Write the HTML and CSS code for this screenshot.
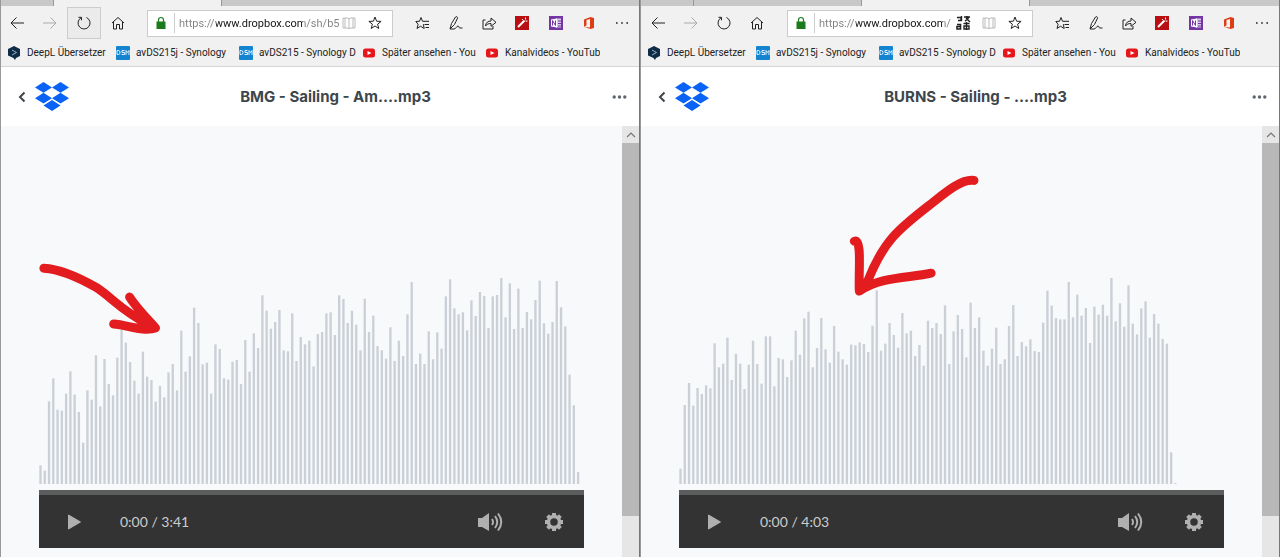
FILE: index.html
```html
<!DOCTYPE html>
<html lang="de">
<head>
    <meta charset="UTF-8">
    <meta name="viewport" content="width=device-width, initial-scale=1.0">
    <title>Dropbox - Sailing</title>
    <link rel="stylesheet" href="styles.css">
</head>
<body>
    <!-- Shared icons -->
    <svg class="sprite" aria-hidden="true">
        <symbol id="i-back" viewBox="0 0 16 16"><path d="M15 8H2M7.500 2.500L2 8l5.500 5.500"/></symbol>
        <symbol id="i-forward" viewBox="0 0 16 16"><path d="M1 8h13M8.500 2.500L14 8l-5.500 5.500"/></symbol>
        <symbol id="i-reload" viewBox="0 0 16 16"><path d="M10.500 2.500A6 6 0 1 1 5 2.800M2.500 2.300H5.500v3"/></symbol>
        <symbol id="i-home" viewBox="0 0 16 16"><path d="M2 8l6-5.500L14 8M3.500 7v7h3V9.500h3V14h3V7"/></symbol>
        <symbol id="i-lock" viewBox="0 0 12 14"><path d="M1.500 5.500h9v7.500h-9z" fill="#1b7a1b" stroke="none"/><path d="M3.500 6V4a2.500 2.500 0 0 1 5 0v2" stroke="#1b7a1b" stroke-width="1.200"/></symbol>
        <symbol id="i-book" viewBox="0 0 16 16"><path d="M2 3h5l1 1 1-1h5v10H9l-1 1-1-1H2zM8 4v10M4 3v10M12 3v10"/></symbol>
        <symbol id="i-star" viewBox="0 0 16 16"><path d="M8 2l1.600 4.200 4.500.2-3.500 2.800 1.200 4.300L8 11l-3.800 2.500 1.200-4.300-3.500-2.800 4.500-.2z"/></symbol>
        <symbol id="i-favs" viewBox="0 0 16 16"><path d="M9 9.500l-.600 0 .8 4-3.700-2.300L2 13.500l1.100-4.200L.8 6.500l3.700-.2L6 2.500l1.500 3.800H14M9.500 9.500H14M10.500 12.500H14"/></symbol>
        <symbol id="i-pen" viewBox="0 0 16 16"><path d="M2 14l1.500-5.500L7.500 2c.8-1 2.500 0 2 1.200L6.500 9.500 2 14h4c2 0 2.500-3 4-3 1.200 0 .5 2 2 2h2.500"/></symbol>
        <symbol id="i-share" viewBox="0 0 16 16"><path d="M4.500 5H2v9h10v-3M4.500 11c.3-3.500 2.500-5 5.500-5V3l5 4.300-5 4V8.500c-2.500 0-4.200.6-5.500 2.500z"/></symbol>
        <symbol id="i-wand" viewBox="0 0 14 14"><path d="M0 0h14v14H0z" fill="#b90f12" stroke="none"/><path d="M3 11l6.500-6.500" stroke="#fff" stroke-width="2"/><path d="M10.500 1.500v2M12.500 5h-2M7 3l.8.800" stroke="#fff"/></symbol>
        <symbol id="i-onenote" viewBox="0 0 14 14"><path d="M0 0h14v14H0z" fill="#7436a4" stroke="none"/><path d="M7 2.500h5v9H7z" fill="#d8c7e6" stroke="none"/><path d="M2 3.500l6-1v9l-6-1z" fill="#fff" stroke="none"/><path d="M3.500 9.500v-5l3 5v-5" stroke="#7436a4"/><path d="M9 5h3M9 7.500h3M9 10h3" stroke="#7436a4"/></symbol>
        <symbol id="i-office" viewBox="0 0 14 14"><path d="M2 3.500L8.500 1 12 2v10l-3.500 1L2 10.800l6 .600V3L4.500 4v5.500L2 10.800z" fill="#dc3e15" stroke="none"/></symbol>
        <symbol id="i-more" viewBox="0 0 16 16"><path d="M2 7.200h1.600v1.600H2zM7.200 7.200h1.600v1.600H7.200zM12.400 7.200H14v1.600h-1.600z" fill="currentColor" stroke="none"/></symbol>
        <symbol id="i-translate" viewBox="0 0 16 16"><path d="M9 2h6M12 1v2M10 6c2-1 3-2 4-4M11 3l4 4M2 2.500h4v3H3M6.500 1v5" stroke-width="1.400"/><path d="M2 9.500h3.500V14H2v-2.500h3.500" stroke-width="1.600"/><path d="M8.500 8.500h6M11.500 7v8M9 11h5v3H9z" stroke-width="1.400"/></symbol>
        <symbol id="i-deepl" viewBox="0 0 12 14"><path d="M6 0l6 3v7l-4 2-1 2-1.500-2L0 9.500V3z" fill="#0f2b46" stroke="none"/><path d="M4 4l4.500 2.500L4 9" stroke="#8fb4c9"/></symbol>
        <symbol id="i-dsm" viewBox="0 0 14 14"><rect width="14" height="14" rx="1" fill="#1584d0" stroke="none"/><path d="M1 4.500h1.500q1.500 0 1.500 2t-1.500 2H1zM8.500 4.500H6v2h2.500v2H5.500M10 9V4.500l1.500 2 1.500-2V9" stroke="#e3f2ff"/></symbol>
        <symbol id="i-youtube" viewBox="0 0 14 14"><rect x="1" y="2.500" width="12" height="9" rx="2.500" fill="#e6161b" stroke="none"/><path d="M5.500 5l4 2-4 2z" fill="#fff" stroke="none"/></symbol>
        <symbol id="i-dropbox" viewBox="0 0 34 30"><path d="M8.500 0L17 5.400 8.500 10.800 0 5.400zM25.500 0L34 5.400l-8.500 5.400L17 5.400zM8.500 10.800L17 16.200l-8.500 5.400L0 16.200zM25.500 10.800l8.500 5.400-8.500 5.400-8.500-5.400zM17 18l8.500 5.400L17 29l-8.500-5.600z" fill="#0a63f5" stroke="none"/></symbol>
        <symbol id="i-chevron" viewBox="0 0 8 12"><path d="M6.500 1.500L2 6l4.500 4.500" stroke-width="2"/></symbol>
        <symbol id="i-dots" viewBox="0 0 16 16"><path d="M.5 8a1.700 1.700 0 1 0 3.400 0 1.700 1.700 0 1 0-3.400 0M5.800 8a1.700 1.700 0 1 0 3.400 0 1.700 1.700 0 1 0-3.400 0M11.100 8a1.700 1.700 0 1 0 3.400 0 1.700 1.700 0 1 0-3.400 0" fill="#5c666e" stroke="none"/></symbol>
        <symbol id="i-up" viewBox="0 0 10 8"><path d="M1 6l4-4 4 4" stroke-width="1.200"/></symbol>
        <symbol id="i-play" viewBox="0 0 14 16"><path d="M1 1v14l12-7z" fill="currentColor" stroke="currentColor" stroke-linejoin="round"/></symbol>
        <symbol id="i-volume" viewBox="0 0 26 20"><path d="M1 6h4l7-5v18l-7-4H1z" fill="currentColor" stroke="none"/><path d="M15 7q2 3 0 6M18 4q4.500 6 0 12M21 1.500q6.500 8.500 0 17" stroke-width="2"/></symbol>
        <symbol id="i-gear" viewBox="0 0 20 20"><circle cx="10" cy="10" r="5.500" stroke-width="3.500"/><path d="M10 1v3M10 16v3M1 10h3M16 10h3M3.600 3.600l2.200 2.200M14.200 14.200l2.200 2.200M3.600 16.400l2.200-2.200M14.200 5.800l2.200-2.200" stroke-width="4"/></symbol>
    </svg>

    <main class="desktop">
        <section class="window">
            <div class="tabs">
                <div class="tab tab-first"></div>
                <div class="tab active"></div>
            </div>
            <nav class="toolbar">
                <div class="nav-buttons">
                    <button aria-label="Zurück"><svg class="icon"><use href="#i-back"/></svg></button>
                    <button aria-label="Vorwärts" disabled><svg class="icon"><use href="#i-forward"/></svg></button>
                    <button class="pressed" aria-label="Aktualisieren"><svg class="icon"><use href="#i-reload"/></svg></button>
                    <button aria-label="Startseite"><svg class="icon"><use href="#i-home"/></svg></button>
                </div>
                <div class="address">
                    <svg class="icon lock"><use href="#i-lock"/></svg>
                    <input type="text" class="url" aria-label="Adresse" value="https://www.dropbox.com/sh/b5">
                    <button aria-label="Leseansicht" disabled><svg class="icon"><use href="#i-book"/></svg></button>
                    <button class="star" aria-label="Favorit"><svg class="icon"><use href="#i-star"/></svg></button>
                </div>
                <div class="tools">
                    <button aria-label="Favoriten"><svg class="icon"><use href="#i-favs"/></svg></button>
                    <button aria-label="Notizen"><svg class="icon"><use href="#i-pen"/></svg></button>
                    <button aria-label="Teilen"><svg class="icon"><use href="#i-share"/></svg></button>
                    <button aria-label="Bearbeiten"><svg class="icon small"><use href="#i-wand"/></svg></button>
                    <button aria-label="OneNote"><svg class="icon small"><use href="#i-onenote"/></svg></button>
                    <button aria-label="Office"><svg class="icon small"><use href="#i-office"/></svg></button>
                    <button aria-label="Mehr"><svg class="icon"><use href="#i-more"/></svg></button>
                </div>
            </nav>
            <div class="bookmarks">
                <a href="#" class="deepl"><svg class="icon small"><use href="#i-deepl"/></svg><span>DeepL Übersetzer</span></a>
                <a href="#"><svg class="icon small"><use href="#i-dsm"/></svg><span>avDS215j - Synology</span></a>
                <a href="#"><svg class="icon small"><use href="#i-dsm"/></svg><span>avDS215 - Synology D</span></a>
                <a href="#"><svg class="icon small"><use href="#i-youtube"/></svg><span>Später ansehen - You</span></a>
                <a href="#"><svg class="icon small"><use href="#i-youtube"/></svg><span>Kanalvideos - YouTub</span></a>
            </div>
            <header class="file-header">
                <a href="#" class="back" aria-label="Zurück"><svg><use href="#i-chevron"/></svg></a>
                <a href="#" class="logo" aria-label="Dropbox"><svg><use href="#i-dropbox"/></svg></a>
                <h1>BMG - Sailing - Am....mp3</h1>
                <button class="more" aria-label="Mehr"><svg class="icon"><use href="#i-dots"/></svg></button>
            </header>
            <div class="page">
                <div class="preview">
                    <svg class="wave" id="wave-bmg" viewBox="0 0 1635 687" preserveAspectRatio="none"></svg>
                    <div class="player">
                        <input type="range" class="seek" aria-label="Position" min="0" max="221" value="0">
                        <div class="controls">
                            <button class="play" aria-label="Abspielen"><svg><use href="#i-play"/></svg></button>
                            <span class="time">0:00 / 3:41</span>
                            <button class="volume" aria-label="Lautstärke"><svg><use href="#i-volume"/></svg></button>
                            <button class="settings" aria-label="Einstellungen"><svg><use href="#i-gear"/></svg></button>
                        </div>
                    </div>
                </div>
                <div class="scrollbar">
                    <button aria-label="Nach oben"><svg><use href="#i-up"/></svg></button>
                    <div class="thumb"></div>
                    <div class="track"></div>
                </div>
            </div>
            <svg class="marker" viewBox="0 0 640 557">
                <path d="M43 269C60 270 81 280 95 288C112 299 120 311 147 325M129 298C136 309 147 320 155 329C143 333 127 326 113 325"/>
            </svg>
        </section>

        <section class="window">
            <div class="tabs">
                <div class="tab tab-first"></div>
                <div class="tab"></div>
                <div class="tab active"></div>
            </div>
            <nav class="toolbar">
                <div class="nav-buttons">
                    <button aria-label="Zurück"><svg class="icon"><use href="#i-back"/></svg></button>
                    <button aria-label="Vorwärts" disabled><svg class="icon"><use href="#i-forward"/></svg></button>
                    <button aria-label="Aktualisieren"><svg class="icon"><use href="#i-reload"/></svg></button>
                    <button aria-label="Startseite"><svg class="icon"><use href="#i-home"/></svg></button>
                </div>
                <div class="address">
                    <svg class="icon lock"><use href="#i-lock"/></svg>
                    <input type="text" class="url" aria-label="Adresse" value="https://www.dropbox.com/">
                    <button class="translate" aria-label="Übersetzen"><svg class="icon"><use href="#i-translate"/></svg></button>
                    <button aria-label="Leseansicht" disabled><svg class="icon"><use href="#i-book"/></svg></button>
                    <button class="star" aria-label="Favorit"><svg class="icon"><use href="#i-star"/></svg></button>
                </div>
                <div class="tools">
                    <button aria-label="Favoriten"><svg class="icon"><use href="#i-favs"/></svg></button>
                    <button aria-label="Notizen"><svg class="icon"><use href="#i-pen"/></svg></button>
                    <button aria-label="Teilen"><svg class="icon"><use href="#i-share"/></svg></button>
                    <button aria-label="Bearbeiten"><svg class="icon small"><use href="#i-wand"/></svg></button>
                    <button aria-label="OneNote"><svg class="icon small"><use href="#i-onenote"/></svg></button>
                    <button aria-label="Office"><svg class="icon small"><use href="#i-office"/></svg></button>
                    <button aria-label="Mehr"><svg class="icon"><use href="#i-more"/></svg></button>
                </div>
            </nav>
            <div class="bookmarks">
                <a href="#" class="deepl"><svg class="icon small"><use href="#i-deepl"/></svg><span>DeepL Übersetzer</span></a>
                <a href="#"><svg class="icon small"><use href="#i-dsm"/></svg><span>avDS215j - Synology</span></a>
                <a href="#"><svg class="icon small"><use href="#i-dsm"/></svg><span>avDS215 - Synology D</span></a>
                <a href="#"><svg class="icon small"><use href="#i-youtube"/></svg><span>Später ansehen - You</span></a>
                <a href="#"><svg class="icon small"><use href="#i-youtube"/></svg><span>Kanalvideos - YouTub</span></a>
            </div>
            <header class="file-header">
                <a href="#" class="back" aria-label="Zurück"><svg><use href="#i-chevron"/></svg></a>
                <a href="#" class="logo" aria-label="Dropbox"><svg><use href="#i-dropbox"/></svg></a>
                <h1>BURNS - Sailing - ....mp3</h1>
                <button class="more" aria-label="Mehr"><svg class="icon"><use href="#i-dots"/></svg></button>
            </header>
            <div class="page">
                <div class="preview">
                    <svg class="wave" id="wave-burns" viewBox="0 0 1635 687" preserveAspectRatio="none"></svg>
                    <div class="player">
                        <input type="range" class="seek" aria-label="Position" min="0" max="243" value="0">
                        <div class="controls">
                            <button class="play" aria-label="Abspielen"><svg><use href="#i-play"/></svg></button>
                            <span class="time">0:00 / 4:03</span>
                            <button class="volume" aria-label="Lautstärke"><svg><use href="#i-volume"/></svg></button>
                            <button class="settings" aria-label="Einstellungen"><svg><use href="#i-gear"/></svg></button>
                        </div>
                    </div>
                </div>
                <div class="scrollbar">
                    <button aria-label="Nach oben"><svg><use href="#i-up"/></svg></button>
                    <div class="thumb"></div>
                    <div class="track"></div>
                </div>
            </div>
            <svg class="marker" viewBox="0 0 640 557">
                <path d="M334 181C320 179 301 197 289 206C258 230 243 242 227 283M214 242C222 240 218 271 219 292C241 277 270 279 291 274"/>
            </svg>
        </section>
    </main>

    <script src="wave.js"></script>
</body>
</html>
```
FILE: styles.css
```css
* {
    box-sizing: border-box;
}
body {
    margin: 0;
    font-family: Roboto, "Open Sans", sans-serif;
    font-size: 10px;
    color: #222;
    background-color: #f7f9fb;
}
button {
    display: flex;
    align-items: center;
    justify-content: center;
    padding: 0;
    border: none;
    background: none;
    color: inherit;
}
a {
    color: inherit;
    text-decoration: none;
}
svg {
    display: block;
    fill: none;
    stroke: currentColor;
}
.sprite {
    display: none;
}
.icon {
    width: 16px;
    height: 16px;
    flex: none;
}
.icon.small {
    width: 14px;
    height: 14px;
}
.desktop {
    display: grid;
    grid-template-columns: 1fr 1fr;
    min-height: 100vh;
}
.window {
    position: relative;
    display: flex;
    flex-direction: column;
    min-width: 0;
    border-left: 1px solid #999;
    border-right: 1px solid #777;
}

/* Browser chrome */
.tabs {
    display: flex;
    height: 6px;
    background-color: #c8c8c8;
}
.tab {
    width: 168px;
    border-right: 1px solid #999;
}
.tab-first {
    width: 53px;
}
.tab.active {
    background-color: #f1f1f1;
}
.toolbar {
    display: flex;
    align-items: center;
    height: 34px;
    background-color: #f1f1f1;
}
.nav-buttons {
    display: flex;
    width: 133px;
    margin-right: 13px;
}
.nav-buttons button {
    flex: 1;
    height: 32px;
}
.nav-buttons button:disabled {
    color: #aaa;
}
.nav-buttons .pressed {
    background-color: #ebebeb;
    border: 1px solid #ccc;
}
.address {
    display: flex;
    align-items: center;
    flex: 1;
    min-width: 0;
    height: 27px;
    background-color: #fff;
    border: 1px solid #ccc;
}
.address .lock {
    width: 26px;
    height: 14px;
}
.address button {
    width: 18px;
    height: 25px;
}
.address .star {
    width: 34px;
}
.address .translate {
    margin-right: 8px;
}
.address button:disabled {
    color: #bbb;
}
.url {
    flex: 1;
    min-width: 0;
    height: 20px;
    padding: 0 0 0 4px;
    border: none;
    border-left: 1px solid #ccc;
    font: 11px Roboto, "Open Sans", sans-serif;
    color: transparent;
    background: linear-gradient(90deg, #808080 41px, #111 41px, #111 128px, #808080 128px) text;
}
.tools {
    display: flex;
    width: 233px;
    margin-left: 13px;
}
.tools button {
    flex: 1;
    height: 32px;
}
.bookmarks {
    display: flex;
    height: 27px;
    padding-left: 6px;
    background-color: #f1f1f1;
    border-bottom: 1px solid #d5d5d5;
}
.bookmarks a {
    display: flex;
    align-items: center;
    gap: 6px;
    width: 123px;
}
.bookmarks .deepl {
    width: 109px;
}
.bookmarks span {
    overflow: hidden;
    white-space: nowrap;
    line-height: 18px;
}

/* Dropbox header */
.file-header {
    display: flex;
    align-items: center;
    height: 59px;
    padding: 0 11px 0 17px;
    background-color: #fff;
    color: #3d464d;
}
.back svg {
    width: 8px;
    height: 12px;
}
.logo {
    margin-left: 9px;
}
.logo svg {
    width: 34px;
    height: 30px;
}
.file-header h1 {
    flex: 1;
    margin: 0;
    padding-right: 10px;
    font: 700 15px Inter, sans-serif;
    text-align: center;
}

/* Audio preview */
.page {
    display: flex;
    flex: 1;
}
.preview {
    flex: 1;
    min-width: 0;
    padding: 129px 38px 9px;
}
.wave {
    width: 100%;
    height: 229px;
    fill: #cbd0d7;
    stroke: none;
}
.player {
    margin-top: 6px;
    background-color: #333;
    color: #b0b0b0;
}
.seek {
    display: block;
    width: 100%;
    height: 5px;
    margin: 0;
    appearance: none;
    background-color: #5c5e5e;
}
.seek::-webkit-slider-thumb {
    appearance: none;
    width: 0;
    height: 0;
}
.controls {
    display: flex;
    align-items: center;
    height: 53px;
    padding: 0 20px 0 28px;
}
.play svg {
    width: 15px;
    height: 16px;
}
.time {
    flex: 1;
    margin-left: 38px;
    font: 14px Lato, sans-serif;
    color: #ccc;
}
.volume svg {
    width: 26px;
    height: 20px;
}
.settings {
    margin-left: 41px;
}
.settings svg {
    width: 20px;
    height: 20px;
}
.scrollbar {
    display: flex;
    flex-direction: column;
    width: 17px;
    background-color: #e6e6e6;
    color: #777;
}
.scrollbar button {
    height: 17px;
}
.scrollbar button svg {
    width: 10px;
    height: 8px;
}
.thumb {
    flex: 9;
    background-color: #b8b8b8;
}
.track {
    flex: 1;
}

/* Hand-drawn arrow over the waveform */
.marker {
    position: absolute;
    top: 0;
    left: 0;
    width: 100%;
    pointer-events: none;
    stroke: #e31c1f;
    stroke-width: 9;
    stroke-linecap: round;
    stroke-linejoin: round;
}
```
FILE: wave.js
```js
// Top edge of each bar, the baseline is at 687
const bmg = [
    631, 647, 439, 370, 464, 467, 416, 349, 419, 471, 563, 406, 434, 301, 454, 312,
    387, 421, 308, 225, 263, 321, 377, 416, 290, 365, 375, 440, 393, 427, 352, 327,
    406, 227, 350, 304, 158, 204, 328, 323, 416, 268, 282, 370, 374, 320, 315, 387,
    255, 350, 235, 279, 121, 167, 221, 201, 165, 286, 289, 175, 318, 246, 268, 257,
    334, 237, 231, 175, 172, 240, 121, 132, 204, 167, 209, 286, 131, 231, 182, 273,
    286, 311, 217, 318, 257, 303, 178, 81, 327, 296, 327, 229, 313, 232, 281, 124,
    73, 160, 178, 172, 226, 136, 183, 111, 123, 219, 124, 120, 69, 187, 85, 222,
    101, 219, 171, 193, 135, 77, 205, 236, 201, 78, 157, 214, 359, 451, 651
];
const burns = [
    641, 450, 384, 452, 399, 417, 391, 400, 265, 337, 326, 248, 375, 296, 326, 402,
    329, 257, 327, 386, 244, 244, 394, 309, 313, 366, 316, 227, 299, 190, 170, 337,
    279, 189, 283, 323, 213, 290, 313, 329, 269, 271, 262, 267, 291, 212, 106, 287,
    266, 204, 240, 278, 174, 235, 227, 303, 270, 332, 197, 219, 204, 237, 151, 327,
    229, 180, 222, 307, 143, 219, 187, 287, 332, 281, 218, 327, 313, 213, 150, 303,
    261, 274, 253, 288, 291, 203, 107, 152, 189, 193, 193, 81, 187, 119, 182, 159,
    264, 155, 179, 149, 182, 69, 199, 145, 215, 91, 206, 238, 160, 139, 248, 177,
    206, 252, 266, 592, 684
];

function drawWave(id, tops) {
    const svg = document.getElementById(id);
    tops.forEach((top, i) => {
        const bar = document.createElementNS('http://www.w3.org/2000/svg', 'rect');
        bar.setAttribute('x', 1 + i * 12.8);
        bar.setAttribute('y', top);
        bar.setAttribute('width', 7);
        bar.setAttribute('height', 687 - top);
        svg.appendChild(bar);
    });
}

drawWave('wave-bmg', bmg);
drawWave('wave-burns', burns);
```
